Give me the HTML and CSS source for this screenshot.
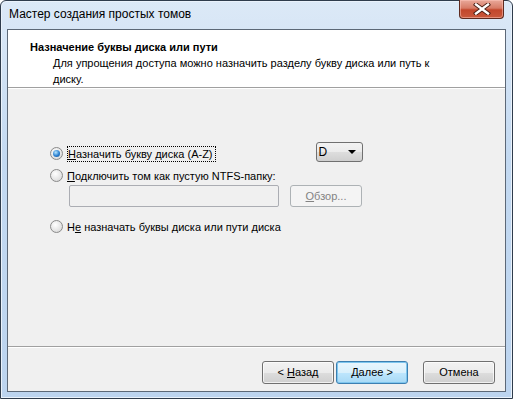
FILE: index.html
```html
<!DOCTYPE html>
<html lang="ru">
<head>
    <meta charset="UTF-8">
    <title>Мастер создания простых томов</title>
    <link rel="stylesheet" href="styles.css">
</head>
<body>
    <div class="window">
        <div class="titlebar">
            <span class="title">Мастер создания простых томов</span>
            <div class="close">
                <svg width="20" height="12" viewBox="0 0 20 12">
                    <path d="M4 1.5 L16 10.5 M16 1.5 L4 10.5" stroke="#4a1e14" stroke-width="4.2" stroke-linecap="square"/>
                    <path d="M4 1.5 L16 10.5 M16 1.5 L4 10.5" stroke="#ffffff" stroke-width="2.4" stroke-linecap="square"/>
                </svg>
            </div>
        </div>
        <div class="client">
            <div class="header">
                <div class="head-title">Назначение буквы диска или пути</div>
                <div class="head-sub">Для упрощения доступа можно назначить разделу букву диска или путь к диску.</div>
            </div>
            <div class="content">
                <div class="row row-letter">
                    <div class="option">
                        <span class="radio checked"></span>
                        <span class="focus"><u>Н</u>азначить букву диска (A-Z)</span>
                    </div>
                    <div class="combo">D<span class="arrow"></span></div>
                </div>
                <div class="option opt-folder">
                    <span class="radio"></span>
                    <span><u>П</u>одключить том как пустую NTFS-папку:</span>
                </div>
                <div class="row row-path">
                    <div class="textbox"></div>
                    <div class="btn disabled"><u>О</u>бзор...</div>
                </div>
                <div class="option opt-none">
                    <span class="radio"></span>
                    <span>Н<u>е</u> назначать буквы диска или пути диска</span>
                </div>
            </div>
            <div class="footer">
                <div class="btn">&lt; <u>Н</u>азад</div>
                <div class="btn default"><u>Д</u>алее &gt;</div>
                <div class="btn cancel">Отмена</div>
            </div>
        </div>
    </div>
</body>
</html>
```

FILE: styles.css
```css
/* Window frame */
body {
    margin: 0;
    padding: 0;
    background: #ffffff;
    font-family: 'Liberation Sans', Arial, sans-serif;
    font-size: 11px;
    color: #000;
}
.window {
    width: 513px;
    height: 399px;
    box-sizing: border-box;
    border: 1px solid #2f3c4c;
    border-radius: 6px 6px 0 0;
    background: linear-gradient(#dce9f7, #c3d9f1 40%, #bcd4ef);
    box-shadow: inset 0 0 0 1px #eaf2fb;
    display: flex;
    flex-direction: column;
}
.titlebar {
    height: 28px;
    position: relative;
    display: flex;
    align-items: center;
}
.title {
    font-family: 'Liberation Sans', Arial, sans-serif;
    font-size: 12px;
    margin-left: 8px;
    margin-top: -2px;
    color: #000;
}
.close {
    position: absolute;
    right: 8px;
    top: -1px;
    width: 43px;
    height: 18px;
    border: 1px solid #5e2a1f;
    border-top: none;
    border-radius: 0 0 4px 4px;
    background: linear-gradient(#e9a99a, #d77b66 45%, #c2462b 55%, #c9593c);
    box-shadow: inset 0 0 0 1px rgba(255, 200, 190, 0.5);
    display: flex;
    align-items: center;
    justify-content: center;
}
/* Client area */
.client {
    flex: 1;
    margin: 0 6px 6px 6px;
    border: 1px solid #5c6877;
    background: #f0f0f0;
    display: flex;
    flex-direction: column;
}
.header {
    height: 58px;
    background: #fff;
    border-bottom: 1px solid #a0a0a0;
    box-shadow: 0 1px 0 #fff;
    padding-left: 22px;
    box-sizing: border-box;
}
.head-title {
    font-weight: bold;
    margin-top: 10px;
    line-height: 14px;
}
.head-sub {
    margin-left: 23px;
    width: 385px;
    line-height: 16px;
    margin-top: 1px;
}
.content {
    flex: 1;
    padding: 54px 0 0 42px;
}
.row {
    display: flex;
}
.row-letter {
    height: 20px;
    align-items: flex-start;
}
.row-letter .option {
    margin-top: 3px;
}
.option {
    display: flex;
    align-items: center;
    height: 17px;
}
.radio {
    width: 11px;
    height: 11px;
    border: 1px solid #8a8a8a;
    border-radius: 50%;
    background: radial-gradient(circle at 40% 35%, #ffffff, #e4e4e4 60%, #cfcfcf);
    margin-right: 4px;
    position: relative;
    flex: none;
}
.radio.checked::after {
    content: "";
    position: absolute;
    left: 2px;
    top: 2px;
    width: 7px;
    height: 7px;
    border-radius: 50%;
    background: radial-gradient(circle at 40% 35%, #b6e6ff, #2a7fd0 55%, #154f8f);
}
.focus {
    border: 1px dotted #000;
    padding: 0 2px 0 0;
    line-height: 14px;
}
.combo {
    margin-left: 100px;
    width: 43px;
    height: 18px;
    border: 1px solid #707070;
    border-radius: 3px;
    background: linear-gradient(#f2f2f2, #ebebeb 50%, #dddddd 51%, #cfcfcf);
    display: flex;
    align-items: center;
    padding-left: 2px;
    position: relative;
    font-size: 12px;
}
.arrow {
    position: absolute;
    right: 6px;
    top: 7px;
    border-left: 4px solid transparent;
    border-right: 4px solid transparent;
    border-top: 4px solid #000;
}
.opt-folder {
    margin-top: 5px;
}
.row-path {
    margin: 1px 0 0 19px;
    align-items: center;
}
.textbox {
    width: 208px;
    height: 20px;
    border: 1px solid #abadb3;
    border-radius: 2px;
    background: #f0f0f0;
}
.row-path .btn {
    margin-left: 11px;
    height: 22px;
    line-height: 20px;
}
.opt-none {
    margin-top: 11px;
}
/* Buttons */
.btn {
    width: 72px;
    height: 23px;
    box-sizing: border-box;
    border: 1px solid #707070;
    border-radius: 3px;
    background: linear-gradient(#f2f2f2, #ebebeb 50%, #dddddd 51%, #cfcfcf);
    box-shadow: inset 0 0 0 1px rgba(255, 255, 255, 0.7);
    text-align: center;
    line-height: 21px;
    font-size: 11px;
}
.btn.disabled {
    border-color: #adb2b5;
    background: #f4f4f4;
    box-shadow: none;
    color: #838383;
}
.btn.default {
    border-color: #3c7fb1;
    background: linear-gradient(#eaf6fd, #d9f0fc 50%, #bee6fd 51%, #a7d9f5);
    box-shadow: inset 0 0 0 1px #7ec6ee;
}
.footer {
    height: 45px;
    border-top: 1px solid #a0a0a0;
    box-shadow: inset 0 1px 0 #fff;
    display: flex;
    justify-content: flex-end;
    gap: 2px;
    padding: 14px 10px 0 0;
    box-sizing: border-box;
}
.footer .cancel {
    margin-left: 13px;
}
```
